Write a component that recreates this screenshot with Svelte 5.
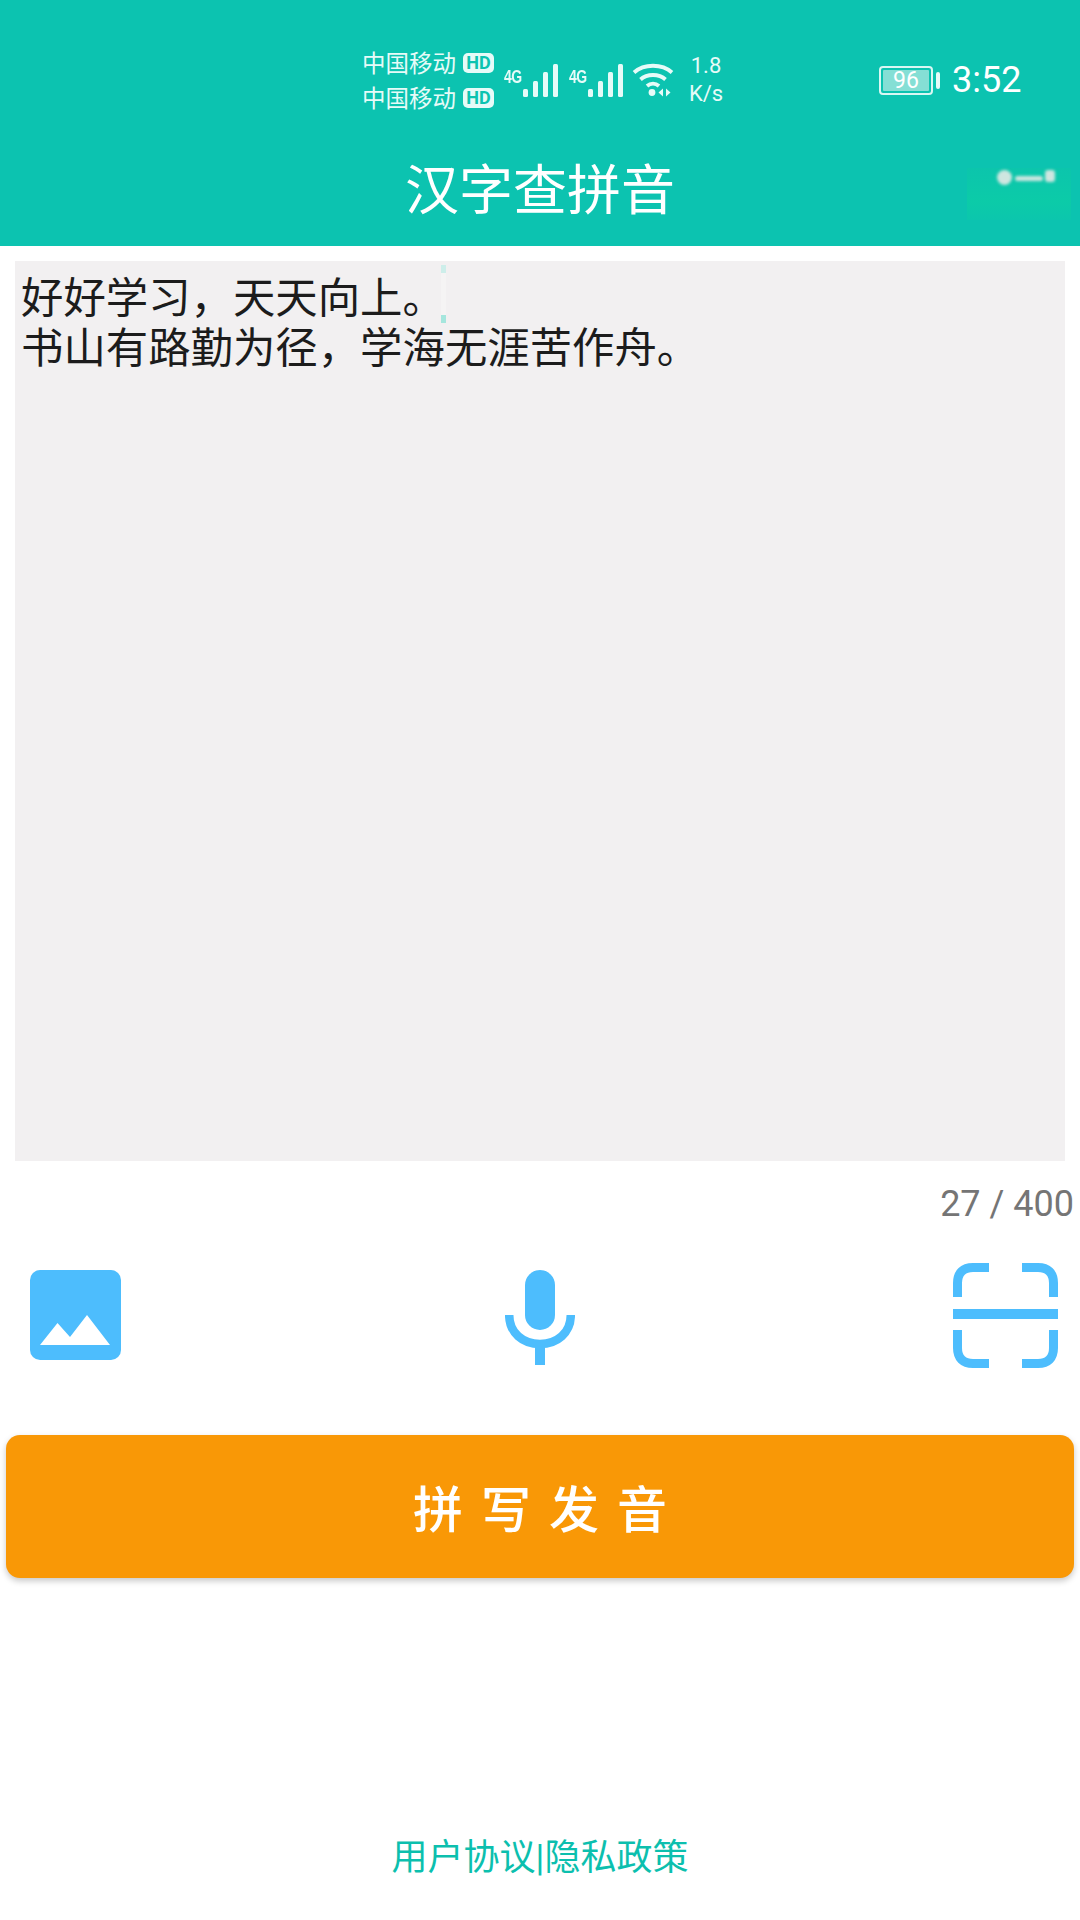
<script>
  const carriers = ['中国移动', '中国移动'];
  const signals = [0, 1];
  const bars = [
    { x: 0, y: 25, h: 8 },
    { x: 10, y: 17, h: 16 },
    { x: 20, y: 8, h: 25 },
    { x: 30, y: 0, h: 33 }
  ];
</script>

<div class="page">
  <header class="top">
    <div class="status">
      <div class="carriers">
        {#each carriers as c}
          <div class="carrier"><span>{c}</span><b class="hd">HD</b></div>
        {/each}
      </div>
      {#each signals as s}
        <div class="signal">
          <span class="g4">4G</span>
          <svg width="36" height="34" viewBox="0 0 36 34" fill="#e6fbf8">
            {#each bars as b}
              <rect x={b.x} y={b.y} width="5" height={b.h} rx="1.500" />
            {/each}
          </svg>
        </div>
      {/each}
      <svg class="wifi" width="42" height="36" viewBox="0 0 42 36" fill="none" stroke="#e6fbf8" stroke-width="3.800">
        <path d="M2 10.500C12 1.500 30 1.500 40 10.500" />
        <path d="M8.500 17.500C15 11.500 27 11.500 33.500 17.500" />
        <path d="M15 24C18.500 21 23.500 21 27 24" />
        <circle cx="20" cy="30.500" r="3.400" fill="#e6fbf8" stroke="none" />
        <path d="M31 26.500L26.500 30.500L31 34.500Z M34 26.500L38.500 30.500L34 34.500Z" fill="#e6fbf8" stroke="none" />
      </svg>
      <div class="speed"><span>1.8</span><span>K/s</span></div>
      <div class="battery">
        <div class="cell"><span>96</span></div>
        <i class="nub"></i>
      </div>
      <div class="time">3:52</div>
    </div>
    <div class="titlebar">
      <h1>汉字查拼音</h1>
      <div class="smudge"><i></i><i></i><i></i></div>
    </div>
  </header>

  <main>
    <div class="input">
      <div>好好学习，天天向上。</div>
      <div>书山有路勤为径，学海无涯苦作舟。</div>
      <i class="caret"></i>
    </div>
    <div class="count">27 / 400</div>

    <div class="tools">
      <svg class="ic-image" width="91" height="90" viewBox="0 0 91 90">
        <rect width="91" height="90" rx="10" fill="#4dbdfd" />
        <path d="M10 75L27.500 53L40 67L57 45L80 75Z" fill="#fff" />
      </svg>
      <svg class="ic-mic" width="70" height="95" viewBox="0 0 70 95" fill="#4dbdfd">
        <rect x="20" y="0" width="30" height="60" rx="15" />
        <path d="M4.200 45C4.200 63 18 74 35 74C52 74 65.800 63 65.800 45" fill="none" stroke="#4dbdfd" stroke-width="8.500" />
        <rect x="30" y="74" width="10" height="21" />
      </svg>
      <svg class="ic-scan" width="105" height="105" viewBox="0 0 105 105" fill="none" stroke="#4dbdfd" stroke-width="9">
        <path d="M4.500 34V20C4.500 10 10 4.500 20 4.500H36" />
        <path d="M69 4.500H85C95 4.500 100.500 10 100.500 20V34" />
        <path d="M4.500 67V85C4.500 95 10 100.500 20 100.500H36" />
        <path d="M69 100.500H85C95 100.500 100.500 95 100.500 85V67" />
        <path d="M0 51H105" stroke-width="10" />
      </svg>
    </div>

    <button class="speak">拼写发音</button>
  </main>

  <footer>用户协议|隐私政策</footer>
</div>

<style>
  :global(body) {
    margin: 0;
    background: #fff;
  }
  .page {
    width: 1080px;
    height: 1920px;
    display: flex;
    flex-direction: column;
    font-family: Roboto, "Noto Sans CJK SC", sans-serif;
    overflow: hidden;
  }
  .top {
    background: #0cc3b0;
    height: 246px;
    box-sizing: border-box;
    padding-top: 49px;
    color: #fff;
  }
  .status {
    display: flex;
    align-items: center;
    height: 62px;
    padding-left: 362px;
    color: #e6fbf8;
  }
  .carriers {
    display: flex;
    flex-direction: column;
    gap: 8px;
    width: 142px;
  }
  .carrier {
    display: flex;
    align-items: center;
    height: 27px;
    font-size: 23.500px;
    line-height: 27px;
    font-family: "Noto Sans CJK SC", sans-serif;
  }
  .hd {
    margin-left: 7px;
    width: 31px;
    height: 20px;
    border-radius: 5px;
    background: #e6fbf8;
    color: #0cc3b0;
    font: 700 18px/20px Roboto, sans-serif;
    text-align: center;
  }
  .signal {
    display: flex;
    align-items: flex-end;
    width: 65px;
    height: 36px;
  }
  .g4 {
    align-self: flex-start;
    margin-top: 7px;
    width: 18px;
    flex: none;
    font: 700 14px/16px "Liberation Sans", sans-serif;
    transform: scaleY(1.250);
    letter-spacing: -0.500px;
  }
  .signal svg {
    flex: none;
    margin-left: 1px;
  }
  .wifi {
    margin-left: -2px;
  }
  .speed {
    display: flex;
    flex-direction: column;
    align-items: center;
    width: 40px;
    margin-left: 12px;
    font-size: 22px;
    line-height: 28px;
  }
  .battery {
    display: flex;
    align-items: center;
    margin-left: 153px;
  }
  .cell {
    box-sizing: border-box;
    width: 54px;
    height: 29px;
    border: 2px solid #d9f7f3;
    border-radius: 4px;
    padding: 2px;
    display: flex;
  }
  .cell span {
    flex: 1;
    background: #85dfd5;
    border-radius: 1px;
    font-size: 23px;
    line-height: 21px;
    text-align: center;
    color: #fff;
  }
  .nub {
    width: 4px;
    height: 17px;
    margin-left: 3px;
    background: #e6fbf8;
    border-radius: 2px;
  }
  .time {
    margin-left: 12px;
    font-size: 36px;
    line-height: 40px;
    color: #fff;
  }
  .titlebar {
    position: relative;
    height: 135px;
    display: flex;
    justify-content: center;
    align-items: center;
  }
  h1 {
    margin: 0;
    padding-top: 16px;
    font: 400 54px/64px "Noto Sans CJK SC", sans-serif;
  }
  .smudge {
    position: absolute;
    left: 967px;
    top: 57px;
    width: 104px;
    height: 52px;
    background: linear-gradient(#0cc5ac, #0ccba8 65%, #0cc6ad);
  }
  .smudge i {
    position: absolute;
    background: #cfe6e0;
    filter: blur(1.500px);
  }
  .smudge i:nth-child(1) {
    left: 30px;
    top: 2px;
    width: 15px;
    height: 15px;
    border-radius: 50%;
  }
  .smudge i:nth-child(2) {
    left: 48px;
    top: 8px;
    width: 28px;
    height: 5px;
    border-radius: 3px;
  }
  .smudge i:nth-child(3) {
    left: 78px;
    top: 2px;
    width: 10px;
    height: 12px;
    border-radius: 3px;
  }
  main {
    padding-top: 15px;
  }
  .input {
    position: relative;
    box-sizing: border-box;
    margin-left: 15px;
    width: 1050px;
    height: 900px;
    padding: 9px 0 0 6px;
    background: #f2f0f1;
    color: #1c1c1c;
    font: 400 42.400px/50px "Noto Sans CJK SC", sans-serif;
  }
  .caret {
    position: absolute;
    left: 426px;
    top: 4px;
    width: 5px;
    height: 58px;
    background: linear-gradient(#cdeeea 0 14%, #f5f4f4 14% 86%, #a5e6dd 86% 100%);
  }
  .count {
    margin-top: 22px;
    padding-right: 6px;
    text-align: right;
    font-size: 36px;
    line-height: 42px;
    color: #757575;
  }
  .tools {
    display: grid;
    grid-template-columns: 1fr auto 1fr;
    align-items: start;
    height: 172px;
    padding: 0 22px;
    margin-top: 38px;
  }
  .ic-image {
    margin: 7px 0 0 8px;
  }
  .ic-mic {
    margin-top: 7px;
  }
  .ic-scan {
    justify-self: end;
  }
  .speak {
    display: block;
    margin: 0 0 0 6px;
    width: 1068px;
    height: 143px;
    border: 0;
    border-radius: 14px;
    background: #f99806;
    box-shadow: 0 3px 6px rgba(0, 0, 0, 0.22);
    color: #fff;
    font: 500 50px/143px "Noto Sans CJK SC", sans-serif;
    letter-spacing: 18px;
    text-indent: 18px;
    padding: 0;
  }
  footer {
    margin-top: auto;
    padding-bottom: 40px;
    text-align: center;
    font: 400 36px/44px Roboto, "Noto Sans CJK SC", sans-serif;
    color: #0cbfae;
  }
</style>
